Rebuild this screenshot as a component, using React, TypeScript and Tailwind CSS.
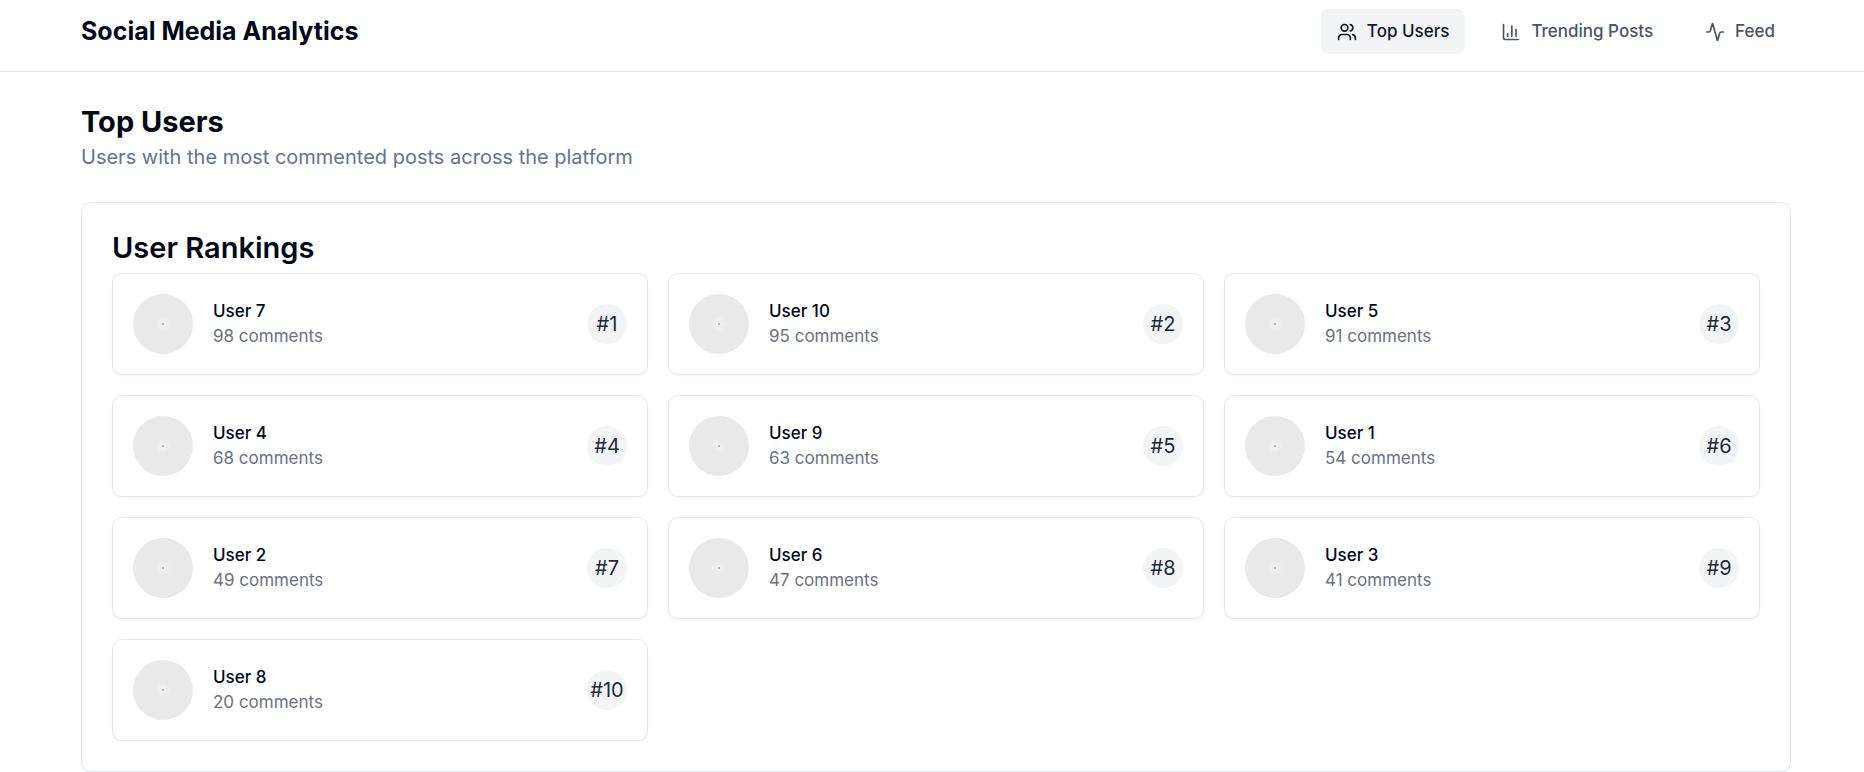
import React from "react";
import { Users, ChartColumn, Activity, type LucideIcon } from "lucide-react";

type NavItem = { label: string; icon: LucideIcon; active?: boolean };

const navItems: NavItem[] = [
  { label: "Top Users", icon: Users, active: true },
  { label: "Trending Posts", icon: ChartColumn },
  { label: "Feed", icon: Activity },
];

const rankings = [
  { name: "User 7", comments: 98 },
  { name: "User 10", comments: 95 },
  { name: "User 5", comments: 91 },
  { name: "User 4", comments: 68 },
  { name: "User 9", comments: 63 },
  { name: "User 1", comments: 54 },
  { name: "User 2", comments: 49 },
  { name: "User 6", comments: 47 },
  { name: "User 3", comments: 41 },
  { name: "User 8", comments: 20 },
];

function Avatar() {
  return (
    <svg viewBox="0 0 60 60" className="size-[60px] shrink-0 rounded-full bg-[#e9e9e9]" aria-hidden="true">
      <circle cx="30" cy="30" r="6.5" fill="#ededed" />
      <circle cx="30" cy="30" r="3" fill="#f2f2f2" />
      <rect x="29" y="29" width="2" height="2" fill="#b8b8b8" />
    </svg>
  );
}

function UserCard({ name, comments, rank }: { name: string; comments: number; rank: number }) {
  return (
    <li className="flex items-center gap-5 rounded-[10px] border border-[#e2e8f0] bg-white p-5 shadow-xs">
      <Avatar />
      <div className="min-w-0 flex-1 leading-[25px]">
        <h3 className="text-[17px] font-medium">{name}</h3>
        <p className="text-[17px] text-[#6b7280]">{comments} comments</p>
      </div>
      <span className="flex size-10 shrink-0 items-center justify-center rounded-full bg-[#f3f4f6] text-xl text-[#1f2937]">
        #{rank}
      </span>
    </li>
  );
}

export default function App() {
  return (
    <div className="bg-white font-['Inter',sans-serif] text-[#020817]">
      <header className="border-b border-[#e2e8f0] pl-2">
        <div className="mx-auto flex h-[71px] max-w-[1750px] items-center justify-between px-5 pb-2">
          <span className="text-[25px] font-bold">Social Media Analytics</span>
          <nav className="flex gap-5">
            {navItems.map(({ label, icon: Icon, active }) => (
              <a
                key={label}
                href="#"
                aria-current={active ? "page" : undefined}
                className={
                  active
                    ? "flex h-[45px] items-center gap-[10px] rounded-lg bg-[#f3f4f6] px-4 text-[17px] font-medium text-[#111827]"
                    : "flex h-[45px] items-center gap-[10px] rounded-lg px-4 text-[17px] font-medium text-[#4b5563]"
                }
              >
                <Icon className="size-5" aria-hidden="true" />
                {label}
              </a>
            ))}
          </nav>
        </div>
      </header>
      <main className="pl-2">
        <div className="mx-auto max-w-[1750px] px-5 pt-[30px]">
          <h1 className="text-[29px] leading-10 font-bold">Top Users</h1>
          <p className="text-xl leading-[30px] text-[#64748b]">
            Users with the most commented posts across the platform
          </p>
          <section className="mt-[30px] rounded-[10px] border border-[#e2e8f0] bg-white p-[30px] shadow-xs">
            <h2 className="text-[29px] leading-[30px] font-semibold">User Rankings</h2>
            <ul className="mt-[10px] grid grid-cols-1 gap-5 md:grid-cols-2 lg:grid-cols-3">
              {rankings.map((user, index) => (
                <UserCard key={user.name} {...user} rank={index + 1} />
              ))}
            </ul>
          </section>
        </div>
      </main>
    </div>
  );
}
